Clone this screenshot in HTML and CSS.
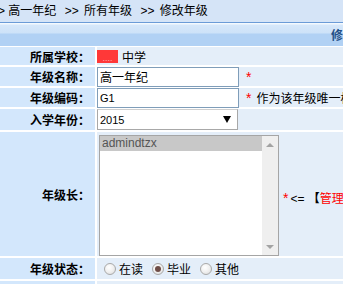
FILE: index.html
```html
<!DOCTYPE html>
<html lang="zh-CN">
<head>
    <meta charset="UTF-8">
    <title>修改年级</title>
    <link rel="stylesheet" href="styles.css">
</head>
<body>
    <div class="page">
        <div class="crumb">&gt; 高一年纪 <span class="sep">&gt;&gt;</span> 所有年级 <span class="sep">&gt;&gt;</span> 修改年级</div>

        <div class="title-bar">
            <div class="title">修改年级</div>
        </div>

        <div class="form">
            <div class="label">所属学校：</div>
            <div class="value">
                <span class="school-mark">....</span>中学
            </div>

            <div class="label">年级名称：</div>
            <div class="value">
                <input class="text-input" type="text" value="高一年纪">
                <span class="req">*</span>
            </div>

            <div class="label">年级编码：</div>
            <div class="value">
                <input class="text-input latin" type="text" value="G1">
                <span class="req">*</span>
                <span class="hint">作为该年级唯一标识，不可重复</span>
            </div>

            <div class="label">入学年份：</div>
            <div class="value">
                <div class="select">
                    <span>2015</span>
                    <span class="arrow"></span>
                </div>
            </div>

            <div class="label">年级长：</div>
            <div class="value value-tall">
                <div class="listbox">
                    <div class="options">
                        <div class="option selected">admindtzx</div>
                    </div>
                    <div class="scrollbar">
                        <span class="up"></span>
                        <span class="down"></span>
                    </div>
                </div>
                <span class="note"><span class="req">*</span>&lt;= <b>【</b><span class="red">管理员账号</span></span>
            </div>

            <div class="label">年级状态：</div>
            <div class="value radios">
                <label class="radio-item"><input type="radio" name="status"> 在读</label>
                <label class="radio-item"><input type="radio" name="status" checked> 毕业</label>
                <label class="radio-item"><input type="radio" name="status"> 其他</label>
            </div>

            <div class="label"></div>
            <div class="value"></div>
        </div>
    </div>
</body>
</html>
```

FILE: styles.css
```css
:root {
    --crumb-bg: #d5e4f7;
    --line-blue: #6b9bd7;
    --label-bg: #d3e7fc;
    --value-bg: #e4eef9;
    --input-border: #7f9db9;
}
html, body {
    margin: 0;
    padding: 0;
    overflow: hidden;
    background: #fff;
}
body {
    font-family: "Liberation Sans", "Noto Sans CJK SC", sans-serif;
    font-size: 12px;
    color: #000;
}
.page {
    width: 710px;
}
.crumb {
    height: 22px;
    line-height: 23px;
    background: var(--crumb-bg);
    text-indent: -2px;
    white-space: nowrap;
    font-size: 12px;
}
.crumb .sep {
    margin: 0 2px 0 5px;
}
.title-bar {
    border-top: 1px solid var(--line-blue);
    border-bottom: 1px solid #fff;
    height: 23px;
    background: linear-gradient(#f4f9fe 0, #f4f9fe 1px, #d6e7fa 2px, #cde2f8 10px, #b1d1f4 11px, #b1d1f4 100%);
}
.title {
    text-align: center;
    font-weight: bold;
    color: #1f4f86;
    line-height: 25px;
    padding-top: 1px;
}
.form {
    display: grid;
    grid-template-columns: 95px 1fr;
    grid-template-rows: 18px 19px 19px 21px 124px 21px 20px;
    gap: 2px;
    background: #fff;
}
.label {
    background: var(--label-bg);
    font-weight: bold;
    text-align: right;
    padding-right: 5px;
    display: flex;
    align-items: center;
    justify-content: flex-end;
}
.value {
    background: var(--value-bg);
    display: flex;
    align-items: center;
    white-space: nowrap;
}
.school-mark {
    display: inline-block;
    width: 21px;
    height: 13px;
    margin-right: 4px;
    background: #ff3838;
    color: #ffb0b0;
    font-size: 9px;
    line-height: 16px;
    text-align: center;
}
.text-input {
    box-sizing: border-box;
    width: 142px;
    height: 20px;
    margin: 0;
    padding: 0 2px;
    border: 1px solid var(--input-border);
    background: #fff;
    font-family: "Liberation Sans", "Noto Sans CJK SC", sans-serif;
    font-size: 12px;
}
.text-input.latin {
    font-size: 11px;
}
.req {
    color: #f00;
    margin-left: 7px;
    font-size: 14px;
    line-height: 12px;
}
.hint {
    margin-left: 5px;
}
.select {
    box-sizing: border-box;
    width: 141px;
    height: 21px;
    border: 1px solid #a8a8a8;
    border-top-color: #cfcfcf;
    background: #fff;
    display: flex;
    align-items: center;
    justify-content: space-between;
    padding: 0 6px 0 2px;
    font-size: 11px;
}
.arrow {
    width: 0;
    height: 0;
    border-left: 4px solid transparent;
    border-right: 4px solid transparent;
    border-top: 7px solid #000;
}
.value-tall {
    align-items: flex-start;
}
.listbox {
    box-sizing: border-box;
    width: 180px;
    height: 121px;
    margin: 3px 0 0 2px;
    border: 1px solid #a5a5a5;
    background: #fff;
    display: flex;
}
.options {
    flex: 1;
}
.option {
    height: 15px;
    line-height: 15px;
    padding-left: 2px;
    color: #555;
}
.option.selected {
    background: #c8c8c8;
}
.scrollbar {
    width: 16px;
    background: #efefef;
    display: flex;
    flex-direction: column;
    justify-content: space-between;
    align-items: center;
    padding: 7px 0 6px;
}
.scrollbar .up {
    border-left: 4px solid transparent;
    border-right: 4px solid transparent;
    border-bottom: 4px solid #a3a3a3;
}
.scrollbar .down {
    border-left: 4px solid transparent;
    border-right: 4px solid transparent;
    border-top: 4px solid #a3a3a3;
}
.note {
    align-self: center;
    margin-left: 4px;
    padding-top: 6px;
}
.note .req {
    margin-left: 0;
    margin-right: 2px;
}
.note b {
    font-weight: bold;
}
.red {
    color: #f00;
}
.radios {
    padding-left: 7px;
    gap: 9px;
}
.radio-item {
    display: flex;
    align-items: center;
    gap: 3px;
}
.radio-item input {
    appearance: none;
    -webkit-appearance: none;
    box-sizing: border-box;
    width: 12px;
    height: 12px;
    margin: 0;
    border: 1px solid #a9a9a9;
    border-radius: 50%;
    background: radial-gradient(circle at 40% 35%, #ffffff 0, #f0f0f0 50%, #d8d8d8 100%);
    position: relative;
}
.radio-item input:checked::after {
    content: "";
    position: absolute;
    left: 2px;
    top: 2px;
    width: 6px;
    height: 6px;
    border-radius: 50%;
    background: #6e4d47;
}
```
